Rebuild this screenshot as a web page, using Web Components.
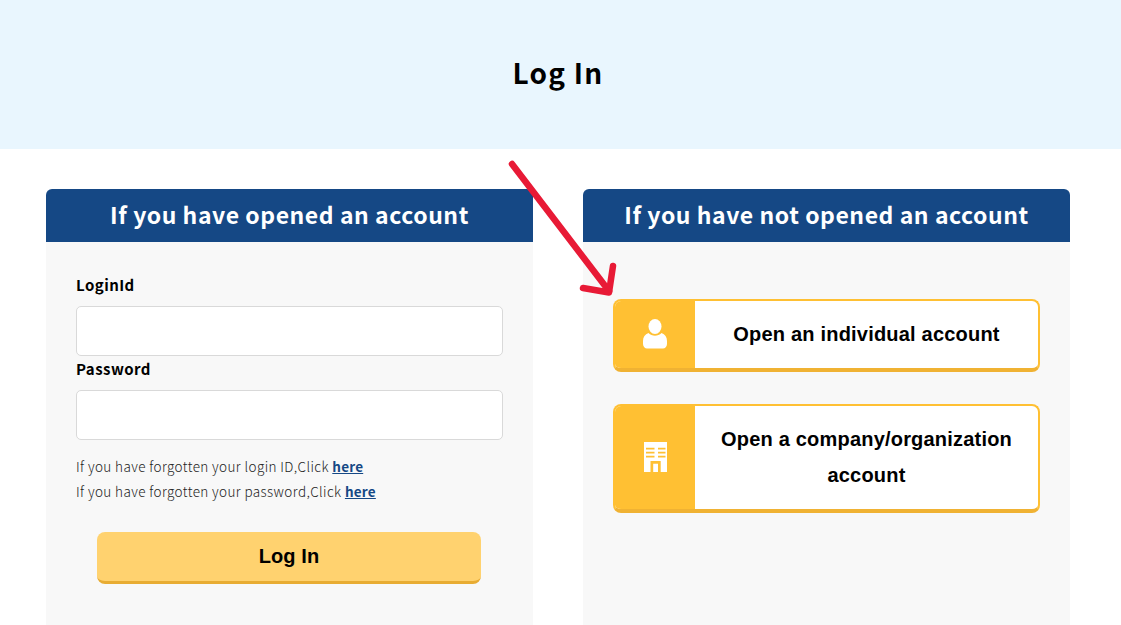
<!DOCTYPE html>
<html lang="en"><head><meta charset="utf-8"><title>Log In</title>
<style>
html,body{margin:0;padding:0;background:#fff;height:625px;overflow:hidden}
body{font-family:"Noto Sans CJK JP","Noto Sans",sans-serif;color:#000}
</style></head><body>
<login-page></login-page>
<template id="t-panel"><style>
:host{display:flex;flex-direction:column;width:487px;height:436px}
h2{margin:0;height:53px;background:#154885;color:#fff;border-radius:6px 6px 0 0;font:700 23px/51px "Noto Sans CJK JP",sans-serif;letter-spacing:.55px;text-align:center}
.b{flex:1;background:#f8f8f8;padding:var(--pad,0)}
</style><h2><slot name="title"></slot></h2><div class="b"><slot></slot></div></template>
<template id="t-field"><style>
:host{display:block}
label{display:block;font:700 15px/22px "Noto Sans CJK JP",sans-serif;letter-spacing:.45px;height:22px;color:#000}
.i{display:block;box-sizing:border-box;width:427px;height:50px;margin-top:10px;background:#fff;border:1px solid #d9d9d9;border-radius:5px}
</style><label><slot></slot></label><div class="i"></div></template>
<template id="t-open"><style>
:host{display:flex;box-sizing:border-box;width:427px;background:#fff;border:2px solid #ffc033;border-bottom:4px solid #f0b233;border-radius:8px;overflow:hidden}
.ic{flex:none;width:80px;background:#ffc033;display:flex;align-items:center;justify-content:center}
.t{flex:1;display:flex;align-items:center;justify-content:center;text-align:center;font:700 20px/36px "Liberation Sans",Arial,sans-serif;letter-spacing:.2px;padding:0 20px 2px;color:#000}
</style><div class="ic"><slot name="icon"></slot></div><div class="t"><slot></slot></div></template>
<script>
function tpl(id){return document.getElementById(id).content.cloneNode(true)}
class LoginPanel extends HTMLElement{constructor(){super();this.attachShadow({mode:'open'}).appendChild(tpl('t-panel'))}}
class LoginField extends HTMLElement{constructor(){super();this.attachShadow({mode:'open'}).appendChild(tpl('t-field'))}}
class OpenButton extends HTMLElement{constructor(){super();this.attachShadow({mode:'open'}).appendChild(tpl('t-open'))}}
class LoginPage extends HTMLElement{constructor(){super();this.attachShadow({mode:'open'}).innerHTML=`<style>
:host{display:block;position:relative;height:625px;overflow:hidden}
header{height:149px;background:#e9f6fe;display:flex;align-items:center;justify-content:center;padding-right:5px}
h1{margin:0;font:700 28px/40px "Noto Sans CJK JP",sans-serif;letter-spacing:1.25px;position:relative;top:-3px}
main{display:flex;gap:50px;padding:40px 0 0 46px}
.left{--pad:32px 30px 0}
.right{--pad:57px 30px 0}
.help{margin:14px 0 0;font:300 13.5px/25px "Noto Sans CJK JP",sans-serif;letter-spacing:.4px;color:#222}
.help a{color:#154885;font-weight:700;text-decoration:underline;letter-spacing:.22px}
.login{display:block;box-sizing:border-box;width:384px;height:52px;margin:28px 0 0 21px;padding:0;background:#ffd26f;border:0;border-bottom:3px solid #e8ac33;border-radius:8px;font:700 20px/49px "Liberation Sans",Arial,sans-serif;letter-spacing:.1px;color:#000;text-align:center}
.f2{margin-top:2px}
.o1{height:73px}.o2{height:109px;margin-top:32px}
.arrow{position:absolute;left:0;top:0;pointer-events:none}
</style>
<header><h1>Log In</h1></header>
<main>
<login-panel class="left"><span slot="title">If you have opened an account</span>
<login-field>LoginId</login-field>
<login-field class="f2">Password</login-field>
<p class="help">If you have forgotten your login ID,Click <a href="#">here</a><br>If you have forgotten your password,Click <a href="#">here</a></p>
<button class="login">Log In</button>
</login-panel>
<login-panel class="right"><span slot="title">If you have not opened an account</span>
<open-button class="o1"><svg slot="icon" width="24" height="30" viewBox="0 0 24 30" style="margin-top:-2px"><ellipse cx="12" cy="7.500" rx="6.500" ry="7.500" fill="#fff"/><path d="M5.500 14C2 15.500 0 18 0 22v3c0 2.500 2 4.500 4 4.500h16c2 0 4-2 4-4.500v-3c0-4-2-6.500-5.500-8-1.800 1.800-4 2.700-6.500 2.700s-4.700-.9-6.500-2.700z" fill="#fff"/></svg>Open an individual account</open-button>
<open-button class="o2"><svg slot="icon" width="23" height="30" viewBox="0 0 23 30" style="margin-top:-2px"><path fill="#fff" fill-rule="evenodd" d="M0 0h23v30H0zM2 5.800v1.600h8.500V5.800zM14 5.800v1.600h7.500V5.800zM2 9.800v1.600h8.500V9.800zM14 9.800v1.600h7.500V9.800zM2 13.800v1.600h8.500v-1.600zM14 13.800v1.600h7.500v-1.600zM6.500 19v11h2.700v-8.300h4.800V30h2.700V19z"/></svg>Open a company/organization account</open-button>
</login-panel>
</main>
<svg class="arrow" width="1121" height="625" viewBox="0 0 1121 625" fill="none" stroke="#e81a36" stroke-width="6.500" stroke-linecap="round" stroke-linejoin="round"><path d="M512 164 609 291"/><path d="M583 288 609 292.500 613 266"/></svg>`}}
customElements.define('login-panel',LoginPanel);
customElements.define('login-field',LoginField);
customElements.define('open-button',OpenButton);
customElements.define('login-page',LoginPage);
</script>
</body></html>
